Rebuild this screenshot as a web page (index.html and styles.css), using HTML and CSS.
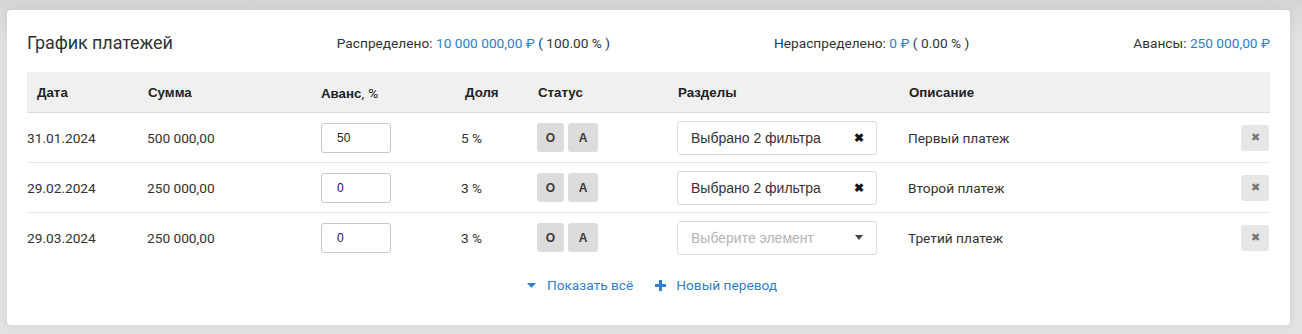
FILE: index.html
```html
<!DOCTYPE html>
<html lang="ru">
<head>
<meta charset="utf-8">
<link rel="stylesheet" href="styles.css">
</head>
<body>
<div class="card">
  <div class="top">
    <div class="title">График платежей</div>
    <div class="stat">Распределено: <span class="val">10 000 000,00 ₽</span> ( 100.00 % )</div>
    <div class="stat">Нераспределено: <span class="val">0 ₽</span> ( 0.00 % )</div>
    <div class="stat">Авансы: <span class="val">250 000,00 ₽</span></div>
  </div>
  <div class="table">
    <div class="row head">
      <div class="h h-date"><b>Дата</b></div>
      <div class="h"><b>Сумма</b></div>
      <div class="h"><b>Аванс</b><span class="pct">, %</span></div>
      <div class="h h-share"><b>Доля</b></div>
      <div class="h"><b>Статус</b></div>
      <div class="h"><b>Разделы</b></div>
      <div class="h"><b>Описание</b></div>
      <div class="h"></div>
    </div>

    <div class="row">
      <div class="c">31.01.2024</div>
      <div class="c">500 000,00</div>
      <div class="c"><div class="inp">50</div></div>
      <div class="c">5 %</div>
      <div class="c status"><span class="sb sb-o">O</span><span class="sb sb-a">A</span></div>
      <div class="c"><div class="sel"><span>Выбрано 2 фильтра</span><span class="clr">✖</span></div></div>
      <div class="c">Первый платеж</div>
      <div class="c del-c"><span class="del">✖</span></div>
    </div>

    <div class="row">
      <div class="c">29.02.2024</div>
      <div class="c">250 000,00</div>
      <div class="c"><div class="inp">0</div></div>
      <div class="c">3 %</div>
      <div class="c status"><span class="sb sb-o">O</span><span class="sb sb-a">A</span></div>
      <div class="c"><div class="sel"><span>Выбрано 2 фильтра</span><span class="clr">✖</span></div></div>
      <div class="c">Второй платеж</div>
      <div class="c del-c"><span class="del">✖</span></div>
    </div>

    <div class="row last">
      <div class="c">29.03.2024</div>
      <div class="c">250 000,00</div>
      <div class="c"><div class="inp">0</div></div>
      <div class="c">3 %</div>
      <div class="c status"><span class="sb sb-o">O</span><span class="sb sb-a">A</span></div>
      <div class="c"><div class="sel"><span class="ph">Выберите элемент</span><svg class="caret" width="8" height="5" viewBox="0 0 8 5"><path d="M0 0h8L4 5z" fill="#444"/></svg></div></div>
      <div class="c">Третий платеж</div>
      <div class="c del-c"><span class="del">✖</span></div>
    </div>
  </div>
  <div class="foot">
    <a class="lnk"><svg width="9" height="5" viewBox="0 0 9 5"><path d="M0 0h9L4.5 5z" fill="#2f80cc"/></svg>Показать всё</a>
    <a class="lnk"><svg width="11" height="11" viewBox="0 0 11 11"><path d="M4 0h3v4h4v3H7v4H4V7H0V4h4z" fill="#2f80cc"/></svg>Новый перевод</a>
  </div>
</div>
</body>
</html>
```

FILE: styles.css
```css
html, body {
  margin: 0;
  padding: 0;
}
body {
  width: 1302px;
  height: 334px;
  background: #e3e3e3;
  background-image: linear-gradient(#d4d4d4 0, #d9d9d9 12px, #e2e2e2 40px);
  font-family: Roboto, "Liberation Sans", sans-serif;
  color: #333;
  padding: 10px 0 0 7px;
  box-sizing: border-box;
  overflow: hidden;
}
.card {
  width: 1283px;
  height: 315px;
  background: #fff;
  border-radius: 4px;
  box-shadow: 0 0 8px rgba(0,0,0,0.08);
  padding: 20px 20px 0 20px;
  box-sizing: border-box;
}
.top {
  display: flex;
  justify-content: space-between;
  align-items: center;
  height: 24px;
  margin-bottom: 18px;
}
.title {
  font-size: 18px;
  color: #333;
  letter-spacing: -0.1px;
}
.stat {
  font-size: 13.7px;
  color: #333;
  padding-top: 1px;
}
.val { color: #2f80cc; }

.table { width: 1243px; }
.row {
  display: grid;
  grid-template-columns: 120px 173px 141px 76px 140px 231px 1fr 29px;
  height: 50px;
  border-bottom: 1px solid #e6e6e6;
  box-sizing: border-box;
  align-items: center;
}
.row.last { border-bottom: none; height: 49px; }
.row.head {
  height: 41px;
  background: #f0f0f0;
  border-bottom: 1px solid #dddddd;
}
.h {
  font-size: 13.3px;
  padding-left: 1px;
  color: #222;
  padding-top: 1px;
}
.h b {
  font-family: "Liberation Sans", Arial, sans-serif;
  font-weight: bold;
}
.pct { font-size: 13.7px; letter-spacing: 0.3px; }
.h-date { padding-left: 10px; }
.h-share { padding-left: 4px; }

.c {
  font-size: 13.7px;
  color: #333;
  display: flex;
  align-items: center;
}
.inp {
  width: 70px;
  height: 30px;
  box-sizing: border-box;
  border: 1px solid #c8c8c8;
  border-radius: 3px;
  font-family: "Liberation Sans", Arial, sans-serif;
  font-size: 12px;
  color: #222;
  padding-left: 15px;
  display: flex;
  align-items: center;
  margin-left: 1px;
}
.status { gap: 4px; }
.sb {
  display: flex;
  align-items: center;
  justify-content: center;
  height: 29px;
  background: #dcdcdc;
  border-radius: 3px;
  font-family: "Liberation Sans", Arial, sans-serif;
  font-weight: bold;
  font-size: 12px;
  color: #3a3a3a;
}
.sb-o { width: 27px; }
.sb-a { width: 30px; }
.sel {
  width: 200px;
  height: 34px;
  box-sizing: border-box;
  border: 1px solid #dcdcdc;
  border-radius: 3px;
  display: flex;
  align-items: center;
  justify-content: space-between;
  padding: 0 12px 0 13px;
  font-family: "Liberation Sans", Arial, sans-serif;
  font-size: 14px;
  color: #333;
}
.ph { color: #b5b5b5; }
.clr {
  font-size: 12px;
  color: #111;
  font-weight: bold;
}
.caret { margin-right: 1px; }
.del-c { justify-content: flex-start; }
.del {
  width: 28px;
  height: 26px;
  background: #e6e6e6;
  border-radius: 3px;
  display: flex;
  align-items: center;
  justify-content: center;
  font-size: 11px;
  color: #777;
}
.foot {
  display: flex;
  justify-content: center;
  gap: 22px;
  padding-top: 15px;
  padding-left: 7px;
}
.lnk {
  display: flex;
  align-items: center;
  gap: 11px;
  font-size: 13.7px;
  color: #2f80cc;
}
.lnk + .lnk { gap: 10px; }
```
